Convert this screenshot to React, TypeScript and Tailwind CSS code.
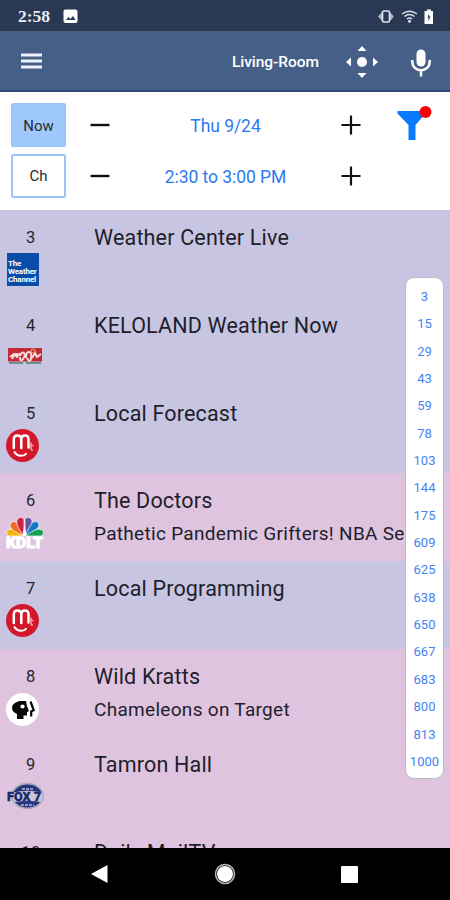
import React from "react";

type Program = { ch: string; title: string; sub?: string; tone: string; logo: React.ReactNode };

const WeatherLogo = () => (
  <div className="mt-[4px] ml-[7px] flex h-[33px] w-[32px] flex-col justify-end bg-[#0a4da8] pb-[2px] pl-[1px] text-[8px] leading-[8px] font-bold tracking-[-0.2px] text-white">
    <span>The</span>
    <span>Weather</span>
    <span>Channel</span>
  </div>
);

const KeloLogo = () => (
  <svg className="mt-[11px] ml-[8px]" width="35" height="17" viewBox="0 0 35 17">
    <rect width="34" height="13.5" fill="#c22a36" />
    <path d="M2 9l4-3 3 3 3-4M4 11q3-7 6-4M12 8q2-5 4-3t-1 6-3-2M18 10q0-6 3-6t2 6-4 0M24 10l3-5 2 4 4-3" fill="none" stroke="#f7dcd8" strokeWidth="2" />
    <circle cx="25" cy="3" r="2" fill="none" stroke="#d9b06a" />
    <path d="M1 15h14M18 15h15" stroke="#47806a" strokeWidth="1.6" />
  </svg>
);

const MidcoLogo = () => (
  <svg className="mt-[3px] ml-[5px]" width="35" height="35" viewBox="0 0 35 35">
    <circle cx="17.5" cy="17.5" r="16.5" fill="#d3182c" />
    <path d="M8.800 20V11.500Q8.800 7.500 12.500 7.500t3.800 4v8.500M16.300 11.500q0-4 3.700-4t3.500 4v8" fill="none" stroke="#fff" strokeWidth="2.500" strokeLinecap="round" />
    <path d="M9.500 24q2 3.500 6 3.800t5.500-2" fill="none" stroke="#fff" strokeWidth="2" strokeLinecap="round" />
    <path d="M26 14.500v6q0 2 2 1.500M24.500 17.500h4" fill="none" stroke="#f0a9a0" strokeWidth="1.500" />
  </svg>
);

const KdltLogo = () => (
  <svg className="mt-[4px] ml-[5px]" width="40" height="35" viewBox="0 0 40 35">
    <g stroke="#fff" strokeWidth=".7">
      <path d="M19 20L3 20Q-1 14 5 13Q10 13 19 20" fill="#f5b40e" />
      <path d="M19 20Q5 14 5 10Q6 4 11 6Q14 9 19 20" fill="#ef6f1f" />
      <path d="M19 20Q10 9 12 4Q15-1 19 3V20" fill="#d21f45" />
      <path d="M20 20V3Q24-1 27 4Q28 9 20 20" fill="#6457a8" />
      <path d="M20 20Q25 9 28 6Q34 4 34 10Q33 14 20 20" fill="#1479c9" />
      <path d="M20 20Q30 13 34 13Q41 14 37 20Z" fill="#16a053" />
    </g>
    <path d="M19.500 8l2 12h-4z" fill="#fff" />
    <text x="1" y="31.500" textLength="37" lengthAdjust="spacingAndGlyphs" fontFamily="Roboto, sans-serif" fontSize="14.5" fontWeight="900" fill="#fff" stroke="#fff" strokeWidth=".9">KDLT</text>
  </svg>
);

const PbsLogo = () => (
  <svg className="mt-[4px] ml-[5px]" width="35" height="35" viewBox="0 0 35 35">
    <circle cx="17.500" cy="17.500" r="16.500" fill="#fff" />
    <path d="M14.500 9H21l1 5 2 5-2 1v3.500H18.500v3.500h-6.500V22Q7 20 7 15.500T14.500 9Z" fill="#080808" />
    <circle cx="17.500" cy="14.500" r="2.100" fill="#fff" />
    <path d="M22.700 9.500h1.500l3.300 8.500-2.500 1.200v4.500h-2" fill="none" stroke="#fff" strokeWidth="1" />
    <path d="M25.500 9.500l3.200 8.500-2.500 1.500v5" fill="none" stroke="#080808" strokeWidth="2.200" />
  </svg>
);

const FoxLogo = () => (
  <svg className="mt-[5px] ml-[6px]" width="40" height="30" viewBox="0 0 40 30">
    <ellipse cx="21.500" cy="15" rx="15.500" ry="12.300" fill="#28337e" stroke="#a5a6b8" strokeWidth="1.700" />
    <path d="M7.500 11.500q14-3.500 28 0l1.500 4-2 5.500q-13-2-27 0l-2-5z" fill="#c9cbd9" />
    <path d="M16 8h11M15 24h13" stroke="#b5b8d8" strokeWidth="1.600" strokeDasharray="3 1" />
    <text x="1" y="20" textLength="34" lengthAdjust="spacingAndGlyphs" fontFamily="Roboto, sans-serif" fontSize="13" fontWeight="900" fill="#1d286f" stroke="#1d286f" strokeWidth=".4">FOX 7</text>
  </svg>
);

const programs: Program[] = [
  { ch: "3", title: "Weather Center Live", tone: "bg-[#c7c5e1]", logo: <WeatherLogo /> },
  { ch: "4", title: "KELOLAND Weather Now", tone: "bg-[#c7c5e1]", logo: <KeloLogo /> },
  { ch: "5", title: "Local Forecast", tone: "bg-[#c7c5e1]", logo: <MidcoLogo /> },
  { ch: "6", title: "The Doctors", sub: "Pathetic Pandemic Grifters! NBA Se", tone: "bg-[#dfc4df]", logo: <KdltLogo /> },
  { ch: "7", title: "Local Programming", tone: "bg-[#c7c5e1]", logo: <MidcoLogo /> },
  { ch: "8", title: "Wild Kratts", sub: "Chameleons on Target", tone: "bg-[#dfc4df]", logo: <PbsLogo /> },
  { ch: "9", title: "Tamron Hall", tone: "bg-[#dfc4df]", logo: <FoxLogo /> },
  { ch: "10", title: "Daily MailTV", tone: "bg-[#dfc4df]", logo: null },
];

const jumps = ["3", "15", "29", "43", "59", "78", "103", "144", "175", "609", "625", "638", "650", "667", "683", "800", "813", "1000"];

const Minus = () => (
  <svg width="20" height="20" viewBox="0 0 20 20"><path d="M.5 10h19" stroke="#111" strokeWidth="2.400" /></svg>
);
const Plus = () => (
  <svg width="20" height="20" viewBox="0 0 20 20"><path d="M.5 10h19M10 .5v19" stroke="#111" strokeWidth="2.200" /></svg>
);

function StepRow({ button, active, label }: { button: string; active?: boolean; label: string }) {
  return (
    <div className="flex h-[44px] items-center">
      <button className={`h-[44px] w-[55px] rounded-[2px] border-2 border-[#9bc5f8] pt-[2px] text-[15px] text-[#2a2a2a] ${active ? "bg-[#9fc9fb]" : "bg-white"}`}>{button}</button>
      <div className="ml-[24px] flex"><Minus /></div>
      <div className="w-[231px] pt-[3px] text-center text-[17.5px] tracking-[-0.05px] whitespace-nowrap text-[#2e78f0]">{label}</div>
      <div className="flex"><Plus /></div>
    </div>
  );
}

export default function App() {
  return (
    <div className="relative flex h-[900px] w-[450px] flex-col overflow-hidden bg-white font-['Roboto',sans-serif]">
      <div className="flex h-[31px] shrink-0 items-center bg-[#293954] pl-[18px] text-white">
        <span className="w-[45px] font-['Liberation_Serif',serif] text-[17.5px] leading-[30px] font-bold text-[#e9edf5]">2:58</span>
        <svg className="mt-[1px]" width="15" height="15" viewBox="0 0 15 15">
          <rect x=".5" y=".5" width="14" height="13.500" rx="2" fill="#fff" />
          <path d="M3 11l2.500-3 2 2L10 7l2.500 4z" fill="#293954" />
        </svg>
        <svg className="ml-[299px]" width="57" height="18" viewBox="0 0 57 18">
          <path d="M5.500 4.500v10L1 9.500zM12.500 4.500v10l4.500-5z" fill="#aab3c3" />
          <rect x="5.500" y="4" width="7" height="11" rx="1.500" fill="#293954" stroke="#e0e4ec" strokeWidth="1.600" />
          <g fill="none" stroke="#d9dee7" strokeWidth="1.500">
            <path d="M25 7q7.500-5.500 15 0M27.500 9.500q5-4 10 0M30 12q2.500-2 5 0" />
          </g>
          <circle cx="32.500" cy="14.300" r="1.500" fill="#e0e4ec" />
          <path d="M47.500 4h2.500V2.500h4V4h2v13h-8.500z" fill="#fff" />
          <path d="M52 6.500l-1.500 4h1v4l2-5h-1.500z" fill="#293954" />
        </svg>
      </div>
      <header className="flex h-[61px] shrink-0 items-center border-b-2 border-[#2b4a7c] bg-[#455f87] text-white">
        <svg className="mt-[1px] ml-[21px]" width="21" height="18" viewBox="0 0 21 18"><path d="M0 3h21M0 9h21M0 15h21" stroke="#eef2ff" strokeWidth="2.800" /></svg>
        <span className="mt-[5px] ml-[190px] w-[100px] text-[15.500px] font-medium tracking-[-0.05px] whitespace-nowrap">Living-Room</span>
        <svg className="mt-[2px] ml-[14px]" width="32" height="32" viewBox="0 0 32 32" fill="#fff">
          <circle cx="16" cy="16" r="5" /><path d="M16 0l4.500 5h-9zM16 32l-4.500-5h9zM0 16l5-4.500v9zM32 16l-5-4.500v9z" />
        </svg>
        <svg className="mt-[4px] ml-[33px]" width="20" height="28" viewBox="0 0 20 28">
          <rect x="5.500" y=".5" width="9" height="17" rx="4.500" fill="#fff" />
          <path d="M1.300 11v2a8.700 8.200 0 0 0 17.400 0v-2M10 21v6.500" fill="none" stroke="#fff" strokeWidth="2.500" />
        </svg>
      </header>
      <section className="flex h-[118px] shrink-0 bg-white pt-[11px] pl-[11px]">
        <div className="flex flex-col gap-[6.500px]">
          <StepRow button="Now" active label="Thu 9/24" />
          <StepRow button="Ch" label="2:30 to 3:00 PM" />
        </div>
        <svg className="ml-[36px]" width="38" height="40" viewBox="0 0 38 40">
          <path d="M.5 8h28v2.500L18.500 22v15h-7V22L.5 10.500z" fill="#087aff" />
          <circle cx="28.500" cy="9" r="6" fill="#fb0008" />
        </svg>
      </section>
      <main className="h-[638px] shrink-0 overflow-hidden">
        {programs.map((p) => (
          <div key={p.ch} className={`flex h-[87.800px] pt-[15px] ${p.tone}`}>
            <div className="w-[94px] shrink-0 text-[#26242f]">
              <div className="w-[62px] pt-[2px] text-center text-[16.500px] leading-[22px] tracking-[0.5px]">{p.ch}</div>
              {p.logo}
            </div>
            <div className="whitespace-nowrap text-[#211e2b]">
              <div className="text-[21.500px] leading-[26px] tracking-[0.18px]">{p.title}</div>
              {p.sub && <div className="mt-[8px] text-[19px] leading-[24px] tracking-[0.3px]">{p.sub}</div>}
            </div>
          </div>
        ))}
      </main>
      <aside className="absolute top-[277px] left-[405px] flex h-[502px] w-[39px] flex-col rounded-[9px] border border-[#bcbac3] bg-white pt-[5px]">
        {jumps.map((n) => (
          <span key={n} className="h-[27.350px] text-center text-[13px] leading-[27px] tracking-[0.05px] text-[#4682f0]">{n}</span>
        ))}
      </aside>
      <nav className="flex h-[52px] shrink-0 items-center bg-black">
        <svg className="ml-[91px]" width="17" height="20" viewBox="0 0 17 20"><path d="M0 10L16.500 1v18z" fill="#fff" /></svg>
        <svg className="ml-[106px]" width="22" height="22" viewBox="0 0 22 22">
          <circle cx="11" cy="11" r="9.500" fill="none" stroke="#bbb" strokeWidth="1.500" /><circle cx="11" cy="11" r="8" fill="#fff" />
        </svg>
        <div className="ml-[105px] h-[17px] w-[17px] rounded-[1px] bg-white" />
      </nav>
    </div>
  );
}
